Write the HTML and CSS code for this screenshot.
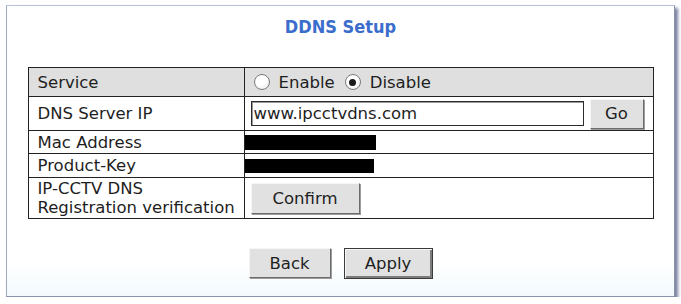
FILE: index.html
```html
<!DOCTYPE html>
<html lang="en">
  <head>
    <meta charset="UTF-8" />
    <title>DDNS Setup</title>
    <link rel="stylesheet" href="styles.css">
  </head>
  <body>
    <div class="frame">
      <h2 class="title">DDNS Setup</h2>
      <table class="setup">
        <tr class="row-service">
          <td class="label">Service</td>
          <td class="value">
            <div class="radios">
              <label class="radio"><input type="radio" name="ddns" value="1" /> Enable</label>
              <label class="radio"><input type="radio" name="ddns" value="0" checked /> Disable</label>
            </div>
          </td>
        </tr>
        <tr class="row-server">
          <td class="label">DNS Server IP</td>
          <td class="value">
            <div class="server">
              <input class="field" type="text" value="www.ipcctvdns.com" />
              <button class="btn go">Go</button>
            </div>
          </td>
        </tr>
        <tr class="row-mac">
          <td class="label">Mac Address</td>
          <td class="value masked"><span class="mask mask-mac"></span></td>
        </tr>
        <tr class="row-key">
          <td class="label">Product-Key</td>
          <td class="value masked"><span class="mask mask-key"></span></td>
        </tr>
        <tr class="row-verify">
          <td class="label">IP-CCTV DNS<br />Registration verification</td>
          <td class="value"><button class="btn confirm">Confirm</button></td>
        </tr>
      </table>
      <div class="actions">
        <button class="btn back">Back</button>
        <button class="btn apply">Apply</button>
      </div>
    </div>
  </body>
</html>
```

FILE: styles.css
```css
* {
  box-sizing: border-box;
  margin: 0;
  padding: 0;
}

body {
  font-family: "DejaVu Sans", Verdana, sans-serif;
  font-size: 16.5px;
  color: #1e1e1e;
  background: #ffffff;
  padding: 5px 0 0 6px;
}

.frame {
  width: 669px;
  height: 292px;
  display: flex;
  flex-direction: column;
  align-items: center;
  border: 1px solid;
  border-color: #b6c2d8 #8a93ad #8a93ad #9ea9c2;
  background: linear-gradient(to bottom, #ffffff 88%, #f3fafd 100%);
  box-shadow: 3px 3px 3px rgba(80, 90, 130, 0.75);
}

.title {
  margin-top: 10px;
  font-family: "DejaVu Sans Condensed", "DejaVu Sans", sans-serif;
  font-size: 18px;
  line-height: 22px;
  font-weight: bold;
  color: #3a6dcc;
}

.setup {
  margin-top: 29px;
  width: 626px;
  border-collapse: collapse;
  border: 1px solid #222222;
}

.setup td {
  border: 1px solid #222222;
  line-height: 19px;
  vertical-align: middle;
}

.label {
  width: 216px;
  padding: 1px 4px 1px 9px;
  white-space: nowrap;
}

.value {
  padding: 1px 6px;
}

.row-service td {
  background: #dfdfdf;
}

.row-service {
  height: 29px;
}

.row-server {
  height: 34px;
}

.row-mac {
  height: 23px;
}

.row-key {
  height: 24px;
}

.row-verify {
  height: 41px;
}

.radios {
  display: flex;
  align-items: center;
  gap: 7px;
}

.radio {
  display: flex;
  align-items: center;
  gap: 9px;
}

.radio input {
  appearance: none;
  -webkit-appearance: none;
  width: 16px;
  height: 16px;
  border: 1px solid #7a7a7a;
  border-radius: 50%;
  background: radial-gradient(circle at 40% 35%, #ffffff 40%, #e6e6e6 100%);
  display: grid;
  place-items: center;
  margin-left: 3px;
}

.radio input:checked::after {
  content: "";
  width: 7px;
  height: 7px;
  border-radius: 50%;
  background: #1a1a1a;
}

.server {
  display: flex;
  align-items: center;
  justify-content: space-between;
  padding-right: 3px;
}

.field {
  width: 333px;
  height: 25px;
  border: 1px solid #2c2c2c;
  box-shadow: inset 1px 1px 0 #9a9a9a;
  font-family: inherit;
  font-size: 16.5px;
  color: #1e1e1e;
  padding: 0 2px;
  outline: none;
}

.btn {
  font-family: inherit;
  font-size: 16.5px;
  color: #1e1e1e;
  background: #e1e1e1;
  border: 1px solid;
  border-color: #f6f6f6 #6c6c6c #6c6c6c #f6f6f6;
  box-shadow: 1px 1px 0 #9c9c9c;
  cursor: pointer;
}

.go {
  width: 54px;
  height: 30px;
}

.masked {
  padding: 0;
}

.mask {
  display: block;
  background: #000000;
}

.mask-mac {
  width: 131px;
  height: 15px;
}

.mask-key {
  width: 129px;
  height: 14px;
}

.confirm {
  width: 109px;
  height: 31px;
}

.actions {
  margin-top: 29px;
  display: flex;
  gap: 13px;
}

.back {
  width: 82px;
  height: 30px;
}

.apply {
  width: 89px;
  height: 31px;
  border: 1px solid #3a3a3a;
  box-shadow: inset 1px 1px 0 #f6f6f6, inset -2px -2px 0 #7c7c7c;
}
```
